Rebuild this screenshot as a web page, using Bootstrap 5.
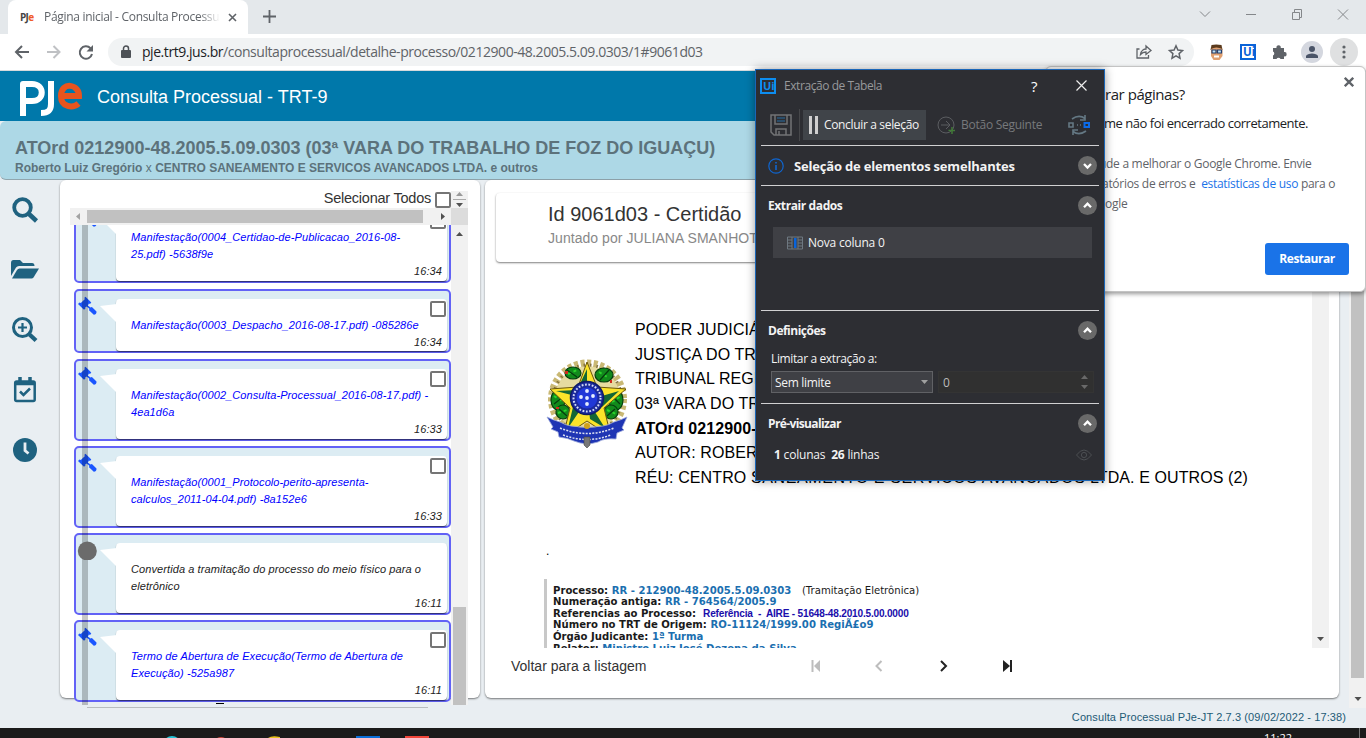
<!DOCTYPE html>
<html lang="pt-BR">
<head>
<meta charset="utf-8">
<meta name="viewport" content="width=device-width, initial-scale=1">
<title>Página inicial - Consulta Processual</title>
<link href="https://cdn.jsdelivr.net/npm/bootstrap@5.3.0/dist/css/bootstrap.min.css" rel="stylesheet">
<style>
html,body{height:738px;overflow:hidden}
body{font-family:"Liberation Sans",Arial,sans-serif;background:#e9eef2;color:#212529;width:1366px;font-size:14px;line-height:1.2}
.segoe{font-family:"Open Sans","Noto Sans",sans-serif}
svg{display:block;flex:none}
.t{white-space:nowrap}
.tabstrip{height:34px;background:#e4e8eb;padding-left:8px}
.browser-tab{width:240px;background:#fff;border-radius:8px 8px 0 0;padding:0 11px 0 12px;font-size:12px;color:#5f6368}
.tab-label{width:176px;letter-spacing:-.3px;-webkit-mask-image:linear-gradient(90deg,#000 88%,transparent)}
.toolbar{height:37px;background:#fff;border-bottom:1px solid #d5d9dc;padding:4px 8px 4px 14px}
.omnibox{height:28px;width:1086px;background:#f1f3f4;border-radius:14px;font-size:14px;color:#5f6368;padding:0 10px 0 13px}
.round-btn{width:28px;height:28px;border-radius:50%;background:#dfe0e1}
.apphead{height:50px;background:#0078aa;padding-left:20px;color:#fff;font-size:18px}
.process{height:59px;background:#add8e6;border-radius:6px;border-bottom:1px solid #90a5ad;color:#5c727b;padding:17px 0 0 15px;font-weight:700}
.process h1{font-size:18px;font-weight:700;line-height:21px;margin:0;letter-spacing:0}
.process p{font-size:12px;line-height:18px;margin:0;letter-spacing:.005px}
.mainrow{height:518px}
.rail{width:60px;padding-top:16px;color:#1f6280}
.rail svg{margin:0 auto 0 11px}
.panel{background:#fff;border-radius:6px;box-shadow:0 1px 2px rgba(0,0,0,.5)}
.timeline{width:420px;padding:11px 0 0 10px}
.hbar{height:17px;background:#f1f1f1;width:381px}
.thumb{background:#c1c1c1}
.corner{width:17px;height:17px;background:#dcdcdc}
.track{width:17px;background:#f1f1f1}
.viewport{width:381px;height:480px;padding-left:4px}
.vline{left:12px;top:0;width:6px;height:480px;background:rgba(0,0,0,.22)}
.first-item{margin-top:-24px}
.entry{width:377px;height:82px;border:2px solid #6262f6;border-radius:5px;background:#dcecf3;margin-bottom:5px;padding:8px 2px 0 40px;flex:none}
.entry.low{height:64px}
.bubble{background:#fff;border-radius:4px;height:100%;box-shadow:0 1px 1px rgba(0,0,0,.55)}
.bubble:before{content:"";position:absolute;left:-16px;top:5px;width:17px;height:19px;background:#fff;clip-path:polygon(0 2px,100% 0,100% 100%)}
.mark-icon{left:1px;top:5px}
.tick{width:16px;height:16px;border:2px solid #757575;border-radius:2px;background:#fff}
.bubble .tick{right:1px;top:2px}
.caption-it{font-style:italic;font-size:11px;line-height:17px;letter-spacing:.09px;color:#00f;padding:18px 0 0 15px;white-space:nowrap}
.plain .caption-it{color:#222}
.hour{right:5px;bottom:2px;font-style:italic;font-size:11px;line-height:16px;color:#222;letter-spacing:.1px}
.low .hour{bottom:1px}
.docpanel{width:854px;margin-left:5px;padding:13px 0 0 11px}
.dochead{height:69px;border-radius:4px;box-shadow:0 1px 2px rgba(0,0,0,.5);padding:9px 0 0 52px;width:815px}
.doc{height:386px;width:816px;padding:56px 0 0 50px}
.doctext{font-size:16px;line-height:24.65px;color:#000;padding-left:6px;letter-spacing:.1px;white-space:nowrap}
.ementa{font-family:"DejaVu Sans",Verdana,sans-serif;border-left:3px solid #c8c8c8;height:75px;font-size:10.1px;line-height:11.6px;font-weight:700;color:#1a1a1a;padding:6px 0 0 6px;white-space:pre}
.ref-link{color:#1b6fb0}
.aire{font-family:"Liberation Sans",Arial,sans-serif;color:#1a0dab;letter-spacing:-.2px}
.pager{height:36px;padding-left:15px}
.foot{height:30px;color:#1d5a75;font-size:11px;padding-right:20px;padding-top:10px;letter-spacing:.1px}
.taskbar{height:10px;background:#1b1b1b}
.pagebar{width:17px;height:528px;right:0;top:180px;background:#f1f1f1;position:absolute}
.dlg{position:absolute;left:755px;top:69px;width:350px;height:412px;background:#2d2e33;border:1px solid #1a66b8;box-shadow:0 0 9px rgba(0,0,0,.4);color:#f3f3f3;font-size:12px;z-index:5;padding:0 5px}
.dlg .rule{height:1px;background:#d0d0d2;flex:none}
.dlg .circ{width:19px;height:19px;border-radius:50%;background:#696969}
.dlg b{font-weight:700}
.sec{height:39px;padding:0 2px 0 7px}
.sec b{padding-top:2px;letter-spacing:-.3px}
.restore{position:absolute;left:1045px;top:66px;width:321px;height:226px;background:#fff;border:1px solid #c4c4c4;border-radius:6px;box-shadow:0 2px 4px rgba(0,0,0,.4);z-index:4;color:#202124}
.restore-txt{padding:16px 0 0 59px}
</style>
</head>
<body class="position-relative d-flex flex-column">
<svg width="0" height="0" class="position-absolute">
  <defs>
    <symbol id="gavel" viewBox="0 0 20 20"><path fill="#1a56ff" d="M8.500.8L14.300 6.600 13 8l-1-.4-1.200 1.900 2.700 2.100 1.400-.7 4.600 4.500Q19.800 18.300 16.800 18.800L12 14.200l.3-1.500-2.600-2.300-1.700 1.300.5.9L7 13.800 1 8l1.500-1.500 1.300.5L8 3 7.200 2z"/></symbol>
    <symbol id="dn" viewBox="0 0 7 4"><path d="M0 0h7L3.500 4z"/></symbol>
    <symbol id="up" viewBox="0 0 7 4"><path d="M0 4h7L3.500 0z"/></symbol>
    <symbol id="cup" viewBox="0 0 19 19"><path d="M6 11.200l3.500-3.500 3.500 3.500" fill="none" stroke="#fff" stroke-width="2.300"/></symbol>
    <symbol id="cdn" viewBox="0 0 19 19"><path d="M6 8l3.500 3.500L13 8" fill="none" stroke="#fff" stroke-width="2.300"/></symbol>
  </defs>
</svg>

<div class="tabstrip d-flex align-items-stretch segoe">
  <div class="browser-tab d-flex align-items-center">
    <span class="fw-bold" style="font-size:10px;letter-spacing:-.7px;color:#444;width:24px">PJ<span style="color:#f05a28">e</span></span>
    <span class="tab-label t overflow-hidden">Página inicial - Consulta Processual</span>
    <svg width="9" height="9" class="ms-auto" stroke="#5f6368" stroke-width="1.600"><path d="M1 1l7 7M8 1l-7 7"/></svg>
  </div>
  <svg width="13" height="13" style="margin:10px 0 0 15px" stroke="#5f6368" stroke-width="1.800"><path d="M6.500 0v13M0 6.500h13"/></svg>
  <div class="d-flex ms-auto" style="padding:8px 14px 0 0">
    <svg width="154" height="14" fill="none" stroke="#84878a"><path d="M2 3.500l5 5 5-5M48 6.500h10M94.500 4.500h7v7h-7zM96.500 4v-2.500h7v8h-2M140 1.500l10 10M150 1.500l-10 10"/></svg>
  </div>
</div>

<div class="toolbar d-flex align-items-center segoe">
  <svg width="82" height="18" fill="none" stroke="#5f6368" stroke-width="2"><path d="M15 9H2.500M8 3L2 9l6 6"/><path stroke="#bfc1c4" d="M33 9h12M39.500 3l6 6-6 6"/><path d="M76.500 5.200A6.200 6.200 0 1 0 78 11"/><path fill="#5f6368" stroke="none" d="M79 2v6.500h-6.500z"/></svg>
  <div class="omnibox d-flex align-items-center" style="margin-left:12px">
    <svg width="10" height="13" style="margin-top:-1px"><rect y="5" width="10" height="8" rx="1" fill="#4d5156"/><path d="M2.500 5V3.500a2.500 2.500 0 0 1 5 0V5" fill="none" stroke="#4d5156" stroke-width="1.500"/></svg>
    <span class="t" style="margin-left:11px;letter-spacing:-.45px"><span style="color:#202124">pje.trt9.jus.br</span>/consultaprocessual/detalhe-processo/0212900-48.2005.5.09.0303/1#9061d03</span>
    <svg width="48" height="16" class="ms-auto" fill="none" stroke="#5f6368" stroke-width="1.300"><path d="M3.500 5H1v9h11.500V11M4.500 10.500C5 6.500 8 5 10 5V2l5 4.500-5 4V8c-2.500 0-4 .7-5.500 2.500z"/><path stroke-width="1.500" d="M40 1.800l1.900 4.200 4.600.5-3.400 3.100.9 4.600-4-2.300-4 2.300.9-4.600-3.400-3.100 4.600-.5z"/></svg>
  </div>
  <svg width="130" height="22" class="ms-auto" style="margin-right:-2px">
    <g transform="translate(8,3)"><path fill="#5a3a1c" d="M1.500 1Q6 0 11.500 1l1 5h-12z"/><path fill="#e0a070" d="M1 5q5-3 11.500 0v7L9.500 16h-6L1 12z"/><path fill="#fff" d="M4 11.500h5v2H4z"/><path fill="#bfe0f5" stroke="#23406f" stroke-width="1.200" d="M2 6h4v3H2zM7.500 6h4v3h-4z"/></g>
    <rect x="39" y="4" width="14" height="14" fill="#fff" stroke="#0a63d8" stroke-width="2"/><text x="41" y="15.200" font-size="11.500" font-weight="700" fill="#0a63d8" font-family="Open Sans">Ui</text>
    <path fill="#5f6368" d="M71 7h3.500a2.200 2.200 0 1 1 4.200 0H82v4a2.200 2.200 0 1 1 0 4.300V18h-3.500a2.200 2.200 0 0 0-4 0H71v-3.500a2.200 2.200 0 0 0 0-4z"/>
    <circle cx="110" cy="11" r="11" fill="#d4d7df"/><circle cx="110" cy="8" r="3" fill="#4a5468"/><path fill="#4a5468" d="M104 17v-2c1-3.500 11-3.500 12 0v2z"/>
  </svg>
  <div class="round-btn d-flex align-items-center justify-content-center"><svg width="4" height="14" fill="#5f6368"><circle cx="2" cy="2" r="1.600"/><circle cx="2" cy="7" r="1.600"/><circle cx="2" cy="12" r="1.600"/></svg></div>
</div>

<header class="apphead d-flex align-items-center">
  <svg width="64" height="38" style="margin-top:4px" fill="none" stroke-width="6"><path stroke="#fff" stroke-linejoin="round" d="M3 37V5H12c13 0 13 17 0 17H5"/><path stroke="#fff" d="M31 2v23c0 7-3 9-10 9"/><path stroke="#e9541d" stroke-width="6" d="M41 17h18c.5-12-18-15-18 0 0 11.500 12 12.500 17.500 7.500"/></svg>
  <span class="t" style="margin:4px 0 0 13px">Consulta Processual - TRT-9</span>
</header>

<section class="process">
  <h1 class="t">ATOrd 0212900-48.2005.5.09.0303 (03ª VARA DO TRABALHO DE FOZ DO IGUAÇU)</h1>
  <p class="t">Roberto Luiz Gregório <span class="fw-normal">x</span> CENTRO SANEAMENTO E SERVICOS AVANCADOS LTDA. e outros</p>
</section>

<main class="mainrow d-flex">
  <nav class="rail d-flex flex-column">
    <svg width="28" height="28" fill="none" stroke="currentColor"><circle cx="11.500" cy="11.500" r="8.300" stroke-width="3.800"/><path stroke-width="4.500" d="M18 18l7.500 7"/></svg>
    <svg width="28" height="22" style="margin-top:35px" fill="currentColor"><path d="M0 17V4q0-3 2.500-3H9l3 3h9q2.500 0 2.500 3H8Q6 7 5 8.500z"/><path d="M1 19.500L6 11q1-1.500 2.500-1.500H28l-5.500 9q-.7 1-2 1z"/></svg>
    <svg width="28" height="28" style="margin-top:35px" fill="none" stroke="currentColor"><circle cx="11.500" cy="11.500" r="9" stroke-width="3"/><path stroke-width="4.200" d="M18.500 18.500l6.500 6"/><path stroke-width="2.200" d="M11.500 7v9M7 11.500h9"/></svg>
    <svg width="28" height="28" style="margin-top:32px" fill="none" stroke="currentColor"><rect x="4.200" y="5.500" width="19.500" height="19.500" rx="1.500" stroke-width="2.500"/><path stroke-width="3.500" d="M4 7.500h20M9 1v5M19 1v5"/><path stroke-width="2.500" d="M9 15.500l3.500 3.500 6.500-6.500"/></svg>
    <svg width="28" height="28" style="margin-top:32px"><circle cx="14" cy="14" r="12" fill="currentColor"/><path d="M14 6.500v8l3.500 3" fill="none" stroke="#e9eef2" stroke-width="2.800"/></svg>
  </nav>

  <section class="panel timeline">
    <div class="d-flex" style="height:17px">
      <div class="d-flex align-items-center justify-content-end" style="width:381px;gap:4px"><span class="t" style="font-size:14.500px;color:#333;letter-spacing:-.23px;margin-top:-2px">Selecionar Todos</span><span class="tick"></span></div>
      <div class="track d-flex flex-column align-items-center justify-content-center" style="gap:3px"><svg width="7" height="4" fill="#999"><use href="#up"/></svg><svg width="13" height="1" style="background:#aaa"></svg><svg width="7" height="4" fill="#505050"><use href="#dn"/></svg></div>
    </div>
    <div class="d-flex">
      <div class="hbar d-flex align-items-center"><svg width="17" height="9" fill="#a3a3a3"><path d="M10 1v7L6 4.500z"/></svg><div class="thumb" style="width:336px;height:13px"></div><svg width="28" height="9" class="ms-auto" fill="#505050"><path d="M18 1v7l4-3.500z"/></svg></div>
      <div class="corner"></div>
    </div>
    <div class="d-flex">
      <div class="viewport position-relative overflow-hidden d-flex flex-column">
        <article class="entry first-item position-relative" style="margin-bottom:6px"><div class="bubble position-relative"><div class="caption-it">Manifestação(0004_Certidao-de-Publicacao_2016-08-<br>25.pdf) -5638f9e</div><span class="tick position-absolute"></span><span class="hour position-absolute">16:34</span></div><svg class="mark-icon position-absolute" width="20" height="20"><use href="#gavel"/></svg></article>
        <article class="entry low position-relative" style="margin-bottom:6px"><div class="bubble position-relative"><div class="caption-it">Manifestação(0003_Despacho_2016-08-17.pdf) -085286e</div><span class="tick position-absolute"></span><span class="hour position-absolute">16:34</span></div><svg class="mark-icon position-absolute" width="20" height="20"><use href="#gavel"/></svg></article>
        <article class="entry position-relative"><div class="bubble position-relative"><div class="caption-it">Manifestação(0002_Consulta-Processual_2016-08-17.pdf) -<br>4ea1d6a</div><span class="tick position-absolute"></span><span class="hour position-absolute">16:33</span></div><svg class="mark-icon position-absolute" width="20" height="20"><use href="#gavel"/></svg></article>
        <article class="entry position-relative"><div class="bubble position-relative"><div class="caption-it">Manifestação(0001_Protocolo-perito-apresenta-<br>calculos_2011-04-04.pdf) -8a152e6</div><span class="tick position-absolute"></span><span class="hour position-absolute">16:33</span></div><svg class="mark-icon position-absolute" width="20" height="20"><use href="#gavel"/></svg></article>
        <article class="entry plain position-relative"><div class="bubble position-relative"><div class="caption-it">Convertida a tramitação do processo do meio físico para o<br>eletrônico</div><span class="hour position-absolute">16:11</span></div><svg class="mark-icon position-absolute" width="20" height="20" style="z-index:2"><circle cx="10.300" cy="11" r="9.500" fill="#6b6b6b"/></svg></article>
        <article class="entry position-relative"><div class="bubble position-relative"><div class="caption-it">Termo de Abertura de Execução(Termo de Abertura de<br>Execução) -525a987</div><span class="tick position-absolute"></span><span class="hour position-absolute">16:11</span></div><svg class="mark-icon position-absolute" width="20" height="20"><use href="#gavel"/></svg></article>
        <div class="vline position-absolute"></div>
        <svg class="position-absolute" width="8" height="1" style="left:146px;top:478px;background:#000"></svg>
      </div>
      <div class="track d-flex flex-column align-items-center justify-content-between"><svg width="7" height="4" style="margin-top:7px" fill="#505050"><use href="#up"/></svg><div class="thumb" style="width:13px;height:98px"></div></div>
    </div>
    <div style="width:341px;margin-left:17px;margin-top:2px;height:1px;background:#b8bcbf"></div>
  </section>

  <section class="panel docpanel">
    <div class="dochead"><div class="t" style="font-size:20px;line-height:24px;color:#333">Id 9061d03 - Certidão</div><div class="t" style="font-size:14px;line-height:24px;color:#888;letter-spacing:.05px">Juntado por JULIANA SMANHOTTO</div></div>
    <div class="d-flex">
      <div class="doc overflow-hidden">
        <div class="d-flex">
          <svg width="83" height="90" viewBox="0 0 83 90" style="margin-top:40px">
            <circle cx="41.500" cy="41" r="33" fill="#e6dba0"/>
            <circle cx="41.500" cy="41" r="36" fill="none" stroke="#c9b874" stroke-width="7" stroke-dasharray="4 2.500"/>
            <circle cx="41.500" cy="41" r="34" fill="none" stroke="#857340" stroke-width="3" stroke-dasharray="1.500 5"/>
            <g fill="#128a1c" stroke="#053f0e" stroke-width="1.200"><ellipse cx="27" cy="15" rx="8" ry="6"/><ellipse cx="58" cy="17" rx="9" ry="7"/><ellipse cx="12" cy="42" rx="7" ry="10"/><ellipse cx="70" cy="42" rx="7" ry="10"/><ellipse cx="17" cy="54" rx="7" ry="7"/><ellipse cx="65" cy="54" rx="7" ry="7"/></g>
            <path fill="none" stroke="#29d32b" stroke-width="2" stroke-dasharray="3 3" d="M22 16l9-4M53 14l10 6M8 38l8 5M66 44l9-6M12 55l9-3M61 52l9 4"/>
            <path fill="none" stroke="#043b0c" stroke-width="1.200" d="M21 12l10 7M63 12l-9 10M8 46l9-7M74 46l-8-8M13 51l8 7M69 51l-8 7"/>
            <path fill="#d02a1c" d="M19 13h3v3h-3zM64 22h2v3h-2zM10 49h3v2h-3z"/>
            <path fill="#fbe32a" stroke="#6b560c" d="M41 4l10 25 29 2-22 19 7 29-24-16-24 16 7-29L4 31l28-2z"/>
            <path fill="#146735" d="M41 11v30l-9-11zM73 33L42 42l14 7zM59 70L42 43l2 18zM22 70l19-28-14 7zM10 33l31 8-10-9z"/>
            <circle cx="41" cy="40" r="16.500" fill="#1b2a9c" stroke="#101c66" stroke-width="1.500"/><circle cx="41" cy="40" r="13.500" fill="none" stroke="#d5dcf5" stroke-width="2" stroke-dasharray="1.800 1.600"/><circle cx="41" cy="40" r="10.500" fill="#2038d8"/>
            <g fill="#e5edff"><circle cx="41" cy="33" r="1.900"/><circle cx="35" cy="39" r="1.900"/><circle cx="41" cy="40" r="1.900"/><circle cx="47" cy="38" r="1.900"/><circle cx="41" cy="46" r="1.900"/></g>
            <path fill="#1f35b4" stroke="#9ca8da" stroke-width=".8" d="M1 59q6 3 13 5 5 3 11 4 16 3 32 0 6-1 11-4 7-2 13-5l-5 11 2 2-7 3-1 6q-12-1-18 3-12 4-24-1-6-3-15-4l-1-5-7-3 2-2z"/><path fill="none" stroke="#dfe3f2" stroke-width="1.500" stroke-dasharray="2 1.300" d="M14 70q27 11 54 0M17 77q24 9 48 0"/><path fill="#777" stroke="#444" stroke-width=".6" d="M38 79h6v8l-3 3-3-3z"/><circle cx="41" cy="68" r="3" fill="#d1a21b"/>
          </svg>
          <div class="doctext">PODER JUDICIÁRIO<br>JUSTIÇA DO TRABALHO<br>TRIBUNAL REGIONAL DO TRABALHO<br>03ª VARA DO TRABALHO DE FOZ<br><b>ATOrd 0212900-48.2005.5.09.0303</b><br>AUTOR: ROBERTO LUIZ GREGÓRIO<br>RÉU: CENTRO <span style="letter-spacing:.62px">SANEAMENTO E SERVICOS AVANCADOS</span> LTDA. E OUTROS (2)</div>
        </div>
        <div style="height:88px;padding-top:53px;font-size:12px;color:#000">.</div>
        <div class="ementa" style="margin-left:-2px">Processo: <span class="ref-link">RR - 212900-48.2005.5.09.0303</span>   <span class="fw-normal">(Tramitação Eletrônica)</span>
Numeração antiga: <span class="ref-link">RR - 764564/2005.9</span>
Referencias ao Processo:  <span class="aire">Referência  -  AIRE - 51648-48.2010.5.00.0000</span>
Número no TRT de Origem: <span class="ref-link">RO-11124/1999.00 RegiÃ£o9</span>
Órgão Judicante: <span class="ref-link">1ª Turma</span>
Relator: <span class="ref-link">Ministro Luiz José Dezena da Silva</span></div>
      </div>
      <div class="track d-flex flex-column justify-content-end align-items-center"><svg width="7" height="4" style="margin-bottom:7px" fill="#505050"><use href="#dn"/></svg></div>
    </div>
    <div class="pager d-flex align-items-center"><span class="t" style="font-size:14px;color:#333">Voltar para a listagem</span>
      <svg width="204" height="14" style="margin-left:164px" fill="none" stroke-width="2"><path stroke="#bdbdbd" d="M1.500 1v12M70.500 2l-5 5 5 5" transform="translate(1)"/><path fill="#bdbdbd" d="M10 1v12L4 7z"/><path stroke="#222" d="M131 2l5 5-5 5M201 1v12"/><path fill="#222" d="M193 1v12l7-6z"/></svg>
    </div>
  </section>
</main>

<footer class="foot d-flex align-items-center justify-content-end t">Consulta Processual PJe-JT 2.7.3 (09/02/2022 - 17:38)</footer>
<div class="taskbar overflow-hidden position-relative d-flex">
  <svg width="1250" height="10"><circle cx="172" cy="17" r="9" fill="#25c3d6"/><circle cx="221" cy="17" r="8" fill="#c94a3c"/><path d="M268 10q4-3 12-1v1z" fill="#e8c21c"/><path d="M356 8h24v2h-24z" fill="#0a6fd9"/><path d="M405 8h24v2h-24z" fill="#f2463a"/></svg>
  <span class="segoe text-white" style="font-size:11px;line-height:14px;margin:3px 0 0 14px">11:22</span><svg width="1" height="10" style="background:#777;margin-left:67px"></svg>
</div>

<div class="pagebar d-flex flex-column align-items-center justify-content-between"><div class="thumb" style="width:13px;height:498px"></div><svg width="8" height="4" style="margin-bottom:7px" fill="#505050"><use href="#dn"/></svg></div>

<aside class="restore segoe">
  <div class="restore-txt t"><div style="font-size:15px;line-height:22px;letter-spacing:-.45px">rar páginas?</div><div style="font-size:13px;line-height:20px;margin:8px 0 0 -1px;letter-spacing:-.48px">me não foi encerrado corretamente.</div>
  <div style="font-size:12px;line-height:20px;margin-top:21px;color:#5f6368;letter-spacing:-.29px"><span style="margin-left:-6px">ude a melhorar o Google Chrome. Envie</span><br><span style="margin-left:-3px">atórios de erros e &nbsp;<span style="color:#1a73e8">estatísticas de uso</span> para o</span><br>ogle</div></div>
  <div class="d-flex justify-content-end" style="padding:29px 16px 0 0"><button class="btn btn-primary segoe p-0 fw-bold" style="width:84px;height:32px;font-size:12px;border:0;border-radius:3px;background:#1a73e8;letter-spacing:-.45px">Restaurar</button></div>
  <svg class="position-absolute" width="10" height="10" style="right:11px;top:10px" stroke="#5f6368" stroke-width="2.300"><path d="M.8.800l8.400 8.400M9.200.8L.8 9.200"/></svg>
</aside>

<section class="dlg segoe d-flex flex-column">
  <div class="d-flex align-items-center" style="height:31px;color:#98999b"><svg width="16" height="16" style="margin-left:-1px"><rect x="1" y="1" width="14" height="14" fill="none" stroke="#0d8df0" stroke-width="2"/><text x="3" y="12.300" font-size="11" font-weight="700" fill="#0d8df0" font-family="Open Sans">Ui</text></svg><span class="t" style="margin-left:8px;padding-top:2px;letter-spacing:-.43px">Extração de Tabela</span><span style="margin-left:149px;color:#fff;font-size:15px">?</span><svg width="11" height="11" class="ms-auto" style="margin-right:12px" stroke="#eee" stroke-width="1.200"><path d="M.5.500l10 10M10.500.5l-10 10"/></svg></div>
  <div class="d-flex align-items-center t" style="height:48px;padding:0 9px 1px 9px">
    <svg width="22" height="22" fill="none" stroke="#727375" stroke-width="1.500"><path d="M1 1h20v20H4l-3-3zM5 1v9h12V1M6 21v-6h10v6M9 17v4"/><path stroke="#2a587e" d="M7 4h8M7 7h8"/></svg>
    <div style="width:1px;height:32px;background:#46474a;margin:0 3px 0 7px"></div>
    <div class="d-flex align-items-center" style="width:123px;height:30px;background:#404449;padding-left:6px"><svg width="9" height="18" fill="#d0d0d0"><path d="M0 0h3v18H0zM6 0h3v18H6z"/></svg><span style="margin-left:6px;padding-top:2px;letter-spacing:-.34px">Concluir a seleção</span></div>
    <svg width="18" height="18" style="margin-left:11px" fill="none" stroke="#5b5d61"><circle cx="9" cy="9" r="8"/><path d="M4 9h9M9 5l4 4-4 4"/><path stroke="#427a38" stroke-width="1.500" d="M15 11v7M11.500 14.500h7"/></svg><span style="margin-left:6px;padding-top:2px;color:#77797c;letter-spacing:-.26px">Botão Seguinte</span>
    <svg width="22" height="20" class="ms-auto" fill="none" stroke="#647884" stroke-width="1.600"><path d="M4 4q7-5 13-.5M17 0v5h-5M18 16q-7 5-13 .5M5 20v-5h5M1 8h4v4H1zM9 10h1M12 10h1"/><path stroke="#0b6bea" stroke-width="2" d="M16.500 8H21v4h-4.500z"/></svg>
  </div>
  <div class="rule" style="margin-top:-4px"></div>
  <div class="sec d-flex align-items-center"><svg width="16" height="16" fill="none" stroke="#0f65cf" stroke-width="1.200"><circle cx="8" cy="8" r="7.200"/><path stroke-width="1.600" d="M8 7v5M8 4v1.500"/></svg><b class="t" style="font-size:13px;margin-left:10px;letter-spacing:-.19px">Seleção de elementos semelhantes</b><svg class="circ ms-auto" width="19" height="19"><use href="#cdn"/></svg></div>
  <div class="rule"></div>
  <div class="sec d-flex align-items-center"><b class="t" style="letter-spacing:-.4px">Extrair dados</b><svg class="circ ms-auto" width="19" height="19"><use href="#cup"/></svg></div>
  <div class="d-flex align-items-center" style="height:31px;width:319px;margin:2px 0 52px 12px;background:#3f4045;padding-left:14px"><svg width="16" height="14"><path fill="none" stroke="#6e7881" d="M.5 1h15v12H.5zM5 1v12M11 1v12M1 4h4M1 7h4M1 10h4M11 4h4M11 7h4M11 10h4"/><path fill="#0864dc" d="M7 2h2.500v10H7z"/></svg><span class="t" style="margin-left:5px;padding-top:2px;letter-spacing:-.22px">Nova coluna 0</span></div>
  <div class="rule"></div>
  <div class="sec d-flex align-items-center"><b class="t" style="letter-spacing:-.5px">Definições</b><svg class="circ ms-auto" width="19" height="19"><use href="#cup"/></svg></div>
  <div class="t" style="height:21px;padding:2px 0 0 10px;letter-spacing:-.37px">Limitar a extração a:</div>
  <div class="d-flex" style="padding-left:10px;height:32px;gap:5px"><div class="d-flex align-items-center justify-content-between" style="width:162px;height:22px;border:1px solid #606165;background:#3f4045;padding:0 4px 0 3px;letter-spacing:-.3px"><span style="padding-top:2px">Sem limite</span><svg width="7" height="4" fill="#a0a0a0"><use href="#dn"/></svg></div><div class="d-flex align-items-center justify-content-between" style="width:156px;height:22px;border:1px solid #343434;background:#303030;color:#bbb;padding:0 5px 0 4px"><span style="padding-top:2px">0</span><span class="d-flex flex-column" style="gap:6px"><svg width="7" height="4" fill="#696969"><use href="#up"/></svg><svg width="7" height="4" fill="#696969"><use href="#dn"/></svg></span></div></div>
  <div class="rule"></div>
  <div class="sec d-flex align-items-center"><b class="t" style="letter-spacing:-.62px;word-spacing:0">Pré-visualizar</b><svg class="circ ms-auto" width="19" height="19"><use href="#cup"/></svg></div>
  <div class="d-flex align-items-center justify-content-between" style="height:23px;padding:0 7px 0 13px"><span class="t" style="padding-top:2px;letter-spacing:-.2px"><b>1</b> colunas &nbsp;<b>26</b> linhas</span><svg width="16" height="12" fill="none" stroke="#4c4f53"><path d="M.5 6Q8-4 15.500 6 8 16 .5 6z"/><circle cx="8" cy="6" r="2.600"/></svg></div>
</section>
<script src="https://cdn.jsdelivr.net/npm/bootstrap@5.3.0/dist/js/bootstrap.bundle.min.js"></script>
</body>
</html>
